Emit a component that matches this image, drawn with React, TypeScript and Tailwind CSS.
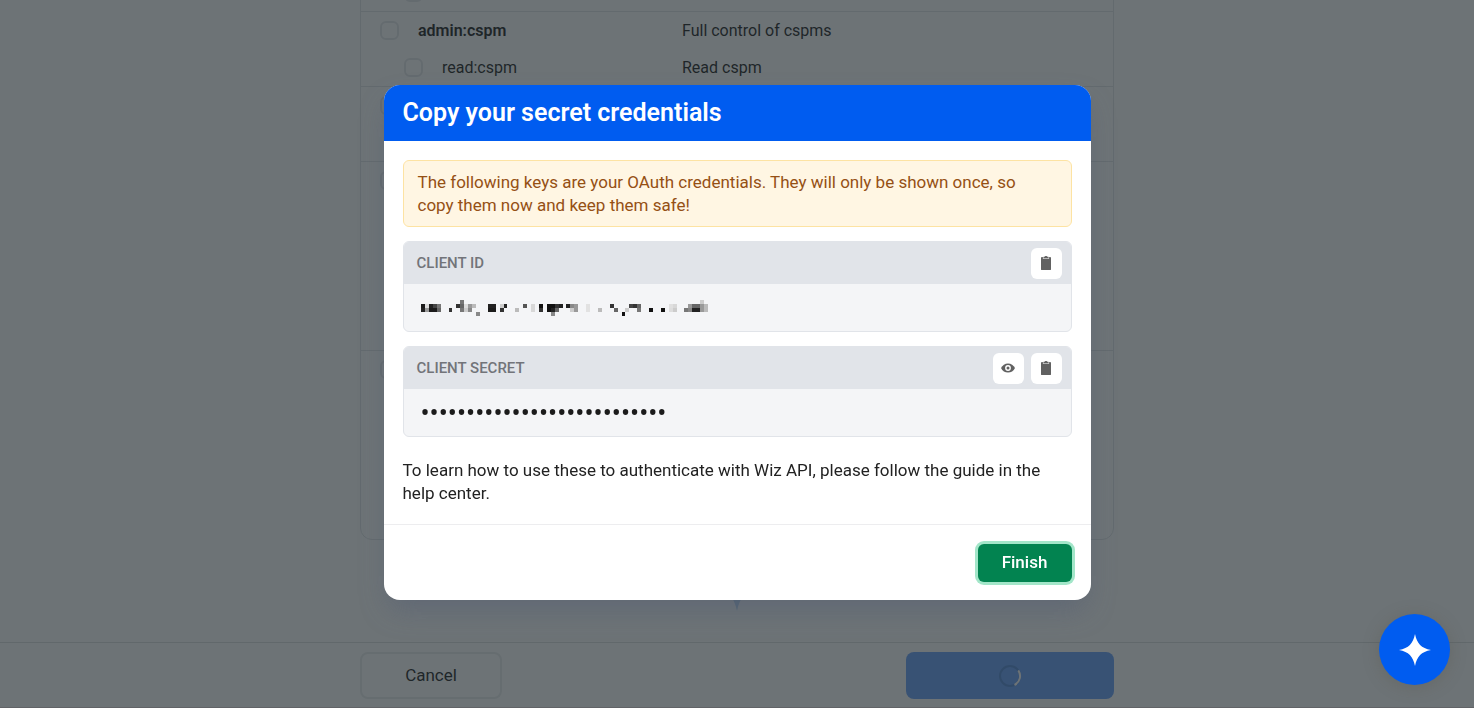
import type { ReactNode } from 'react';

type Cell = [col: number, row: number, shade: string];

const maskedId: Cell[] = [
  [0, 1, '#1b1b1b'], [0, 2, '#222'], [1, 1, '#ddd'], [1, 2, '#999'], [2, 1, '#222'], [2, 2, '#1b1b1b'],
  [3, 1, '#444'], [3, 2, '#1b1b1b'], [4, 1, '#777'], [4, 2, '#666'], [7, 2, '#333'], [9, 1, '#333'],
  [10, 0, '#777'], [10, 1, '#666'], [10, 2, '#777'], [11, 1, '#ddd'], [11, 2, '#ccc'], [12, 1, '#999'],
  [12, 2, '#888'], [13, 1, '#bbb'], [14, 3, '#888'], [17, 1, '#222'], [17, 2, '#1b1b1b'], [18, 1, '#222'],
  [18, 2, '#1b1b1b'], [20, 1, '#ccc'], [20, 2, '#333'], [21, 1, '#222'], [24, 2, '#bbb'], [26, 1, '#555'],
  [28, 1, '#d8d8d8'], [28, 2, '#d8d8d8'], [30, 1, '#111'], [30, 2, '#333'], [32, 1, '#111'], [32, 2, '#111'],
  [33, 1, '#111'], [33, 2, '#222'], [33, 3, '#888'], [34, 1, '#333'], [34, 2, '#666'], [35, 1, '#222'],
  [37, 1, '#222'], [38, 1, '#888'], [38, 2, '#ccc'], [39, 1, '#999'], [39, 2, '#999'], [42, 1, '#e2e2e2'],
  [42, 2, '#e2e2e2'], [45, 2, '#bbb'], [48, 1, '#333'], [49, 2, '#666'], [51, 3, '#111'], [52, 2, '#ccc'],
  [53, 1, '#444'], [54, 1, '#333'], [55, 1, '#666'], [55, 2, '#777'], [58, 2, '#111'], [61, 2, '#111'],
  [63, 1, '#e0e0e0'], [63, 2, '#ddd'], [64, 1, '#d8d8d8'], [64, 2, '#ccc'], [67, 2, '#777'], [68, 1, '#999'],
  [68, 2, '#888'], [69, 1, '#666'], [69, 2, '#222'], [70, 1, '#666'], [70, 2, '#222'], [71, 0, '#ccc'],
  [71, 1, '#999'], [71, 2, '#999'], [72, 1, '#bbb'], [72, 2, '#bbb'],
];

function Star({ className }: { className: string }) {
  return (
    <svg viewBox="0 0 32 32" className={className} fill="currentColor" aria-hidden="true">
      <path d="M16 0C18 9.8 22.2 14 32 16C22.2 18 18 22.2 16 32C14 22.2 9.8 18 0 16C9.8 14 14 9.8 16 0Z" />
    </svg>
  );
}

function ClipboardIcon() {
  return (
    <svg viewBox="0 0 12 16" className="h-4 w-3" aria-hidden="true">
      <path d="M1.9 2H10.1Q11 2 11 2.9V14.2Q11 15.1 10.1 15.1H1.9Q1 15.1 1 14.2V2.9Q1 2 1.9 2Z" fill="#616161" />
      <path d="M2.8 2V3.2Q2.8 4.1 3.7 4.1H8.3Q9.2 4.1 9.2 3.2V2Z" fill="#cfcfcf" />
      <path d="M3.6 1.7H4.6C4.8.6 7.2.6 7.4 1.7H8.4V3.2H3.6Z" fill="#616161" />
    </svg>
  );
}

function EyeIcon() {
  return (
    <svg viewBox="0 0 16 12" className="h-3 w-4" aria-hidden="true">
      <path d="M1 6C2.4 3.1 5 1.4 8 1.4S13.6 3.1 15 6C13.6 8.9 11 10.6 8 10.6S2.4 8.9 1 6Z" fill="#616161" />
      <circle cx="8" cy="6" r="2.9" fill="#fff" />
      <circle cx="8" cy="6" r="1.5" fill="#616161" />
    </svg>
  );
}

function IconButton({ label, children }: { label: string; children: ReactNode }) {
  return (
    <button type="button" aria-label={label} className="flex size-[31px] items-center justify-center rounded-md bg-white">
      {children}
    </button>
  );
}

function Field({ title, actions, children }: { title: ReactNode; actions: ReactNode; children: ReactNode }) {
  return (
    <section className="overflow-hidden rounded-md border border-[#e1e4e9] bg-[#f4f5f7]">
      <div className="flex h-[42px] items-center justify-between bg-[#e1e4e9] pr-[9px] pl-[13px] text-[15px] font-medium text-[#727479]">
        {title}
        <div className="flex gap-[7px]">{actions}</div>
      </div>
      <div className="flex h-[47px] items-center px-[17px]">{children}</div>
    </section>
  );
}

function Check({ label }: { label: string }) {
  return (
    <input
      type="checkbox"
      aria-label={label}
      className="size-[19px] shrink-0 appearance-none rounded-md border-2 border-[#e4e6e8]"
    />
  );
}

function ScopeRow({ name, text, nested = false }: { name: string; text?: string; nested?: boolean }) {
  return (
    <div className={nested ? 'flex h-[37px] items-center pl-[43px]' : 'flex h-[37px] items-center pl-[19px]'}>
      <Check label={name} />
      {text && (
        <>
          <span className={nested ? 'w-[259px] pl-[19px]' : 'w-[283px] pl-[19px] font-semibold'}>{name}</span>
          <span>{text}</span>
        </>
      )}
    </div>
  );
}

export default function App() {
  return (
    <div className="relative h-screen overflow-hidden bg-white font-[Roboto,sans-serif] text-[#131313]">
      <div className="flex h-full flex-col">
        <main className="flex min-h-0 flex-1 flex-col items-center justify-end overflow-hidden pb-[31px]">
          <div className="w-full max-w-[754px] shrink-0 divide-y divide-[#e0e3e5] rounded-xl border border-[#e0e3e5] text-base">
            <div>
              <ScopeRow name="read:controls" nested />
            </div>
            <div className="h-[75px]">
              <ScopeRow name="admin:cspm" text="Full control of cspms" />
              <ScopeRow name="read:cspm" text="Read cspm" nested />
            </div>
            <div className="h-[75px]">
              <ScopeRow name="admin:digital_trust" />
            </div>
            <div className="h-[189px]">
              <ScopeRow name="admin:policies" />
            </div>
            <div className="h-[188px]">
              <ScopeRow name="admin:reports" />
            </div>
          </div>
          <Star className="mt-[23px] size-12 shrink-0 text-[#b4d2f2]" />
        </main>
        <footer className="border-t border-b border-t-[#d9dcde] border-b-[#d9cfd0] pt-[9px] pb-2">
          <div className="mx-auto flex max-w-[754px] justify-between text-[17px]">
            <button type="button" className="h-[47px] w-[142px] rounded-lg border-2 border-[#e9ebec]">
              Cancel
            </button>
            <button
              type="button"
              aria-label="Saving"
              className="flex h-[47px] w-[208px] items-center justify-center rounded-lg bg-[#5f9af8]"
            >
              <svg viewBox="0 0 24 24" className="size-6" fill="none" strokeWidth="2" aria-hidden="true">
                <circle cx="12" cy="12" r="10" stroke="#4a84d4" />
                <path d="M20.3 6.4A10 10 0 0 1 16.5 21" stroke="#fff" />
              </svg>
            </button>
          </div>
        </footer>
      </div>

      <div className="fixed inset-0 flex items-start justify-center bg-[#262e32]/67 pt-[85px]">
        <div
          role="dialog"
          aria-labelledby="dialog-title"
          className="w-[707px] max-w-full overflow-hidden rounded-2xl bg-white shadow-[0_14px_28px_-4px_rgba(80,92,115,0.45)]"
        >
          <h1 id="dialog-title" className="bg-[#005cf0] px-[19px] py-3 text-[25px] leading-8 font-semibold text-white">
            Copy your secret credentials
          </h1>
          <div className="flex flex-col gap-[14px] p-[19px] text-[17px] leading-[23px]">
            <p className="rounded-md border border-[#fde3a3] bg-[#fff6e3] pt-[10px] pr-10 pb-[9px] pl-[14px] text-[#955014]">
              The following keys are your OAuth credentials. They will only be shown once, so copy them now and keep
              them safe!
            </p>
            <Field
              title={<h2>CLIENT ID</h2>}
              actions={
                <IconButton label="Copy client ID">
                  <ClipboardIcon />
                </IconButton>
              }
            >
              <svg viewBox="0 0 73 4" className="h-4 w-[287px]" shapeRendering="crispEdges" preserveAspectRatio="none" role="img" aria-label="Masked client ID">
                {maskedId.map(([col, row, shade]) => (
                  <rect key={`${col}-${row}`} x={col} y={row} width="1" height="1" fill={shade} />
                ))}
              </svg>
            </Field>
            <Field
              title={<label htmlFor="client-secret">CLIENT SECRET</label>}
              actions={
                <>
                  <IconButton label="Show client secret">
                    <EyeIcon />
                  </IconButton>
                  <IconButton label="Copy client secret">
                    <ClipboardIcon />
                  </IconButton>
                </>
              }
            >
              <input
                id="client-secret"
                type="password"
                readOnly
                value="abcdefghijklmnopqrstuvwxyz0"
                className="w-full bg-transparent text-[27px] text-[#1b1b1b] outline-none"
              />
            </Field>
            <p className="pt-2 text-[#222]">
              To learn how to use these to authenticate with Wiz API, please follow the guide in the help center.
            </p>
          </div>
          <div className="flex justify-end border-t border-[#ededef] px-[19px] pt-[19px] pb-[18px]">
            <button
              type="button"
              className="h-[38px] w-[94px] rounded-md bg-[#028350] text-[17px] font-medium text-white ring-3 ring-[#a3e6c9]"
            >
              Finish
            </button>
          </div>
        </div>
      </div>

      <button
        type="button"
        aria-label="Ask assistant"
        className="fixed right-6 bottom-[23px] flex size-[71px] items-center justify-center rounded-full bg-[#005cf0] text-white shadow-[0_2px_16px_rgba(90,85,75,0.35)]"
      >
        <Star className="size-8" />
      </button>
    </div>
  );
}
